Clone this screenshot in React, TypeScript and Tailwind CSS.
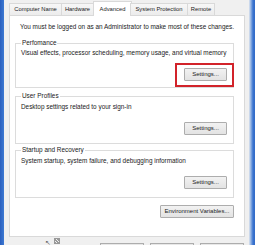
import React from 'react';

const tabs = [
  { label: 'Computer Name', w: 'w-[53px]' },
  { label: 'Hardware', w: 'w-[33px]' },
  { label: 'Advanced', w: 'w-[39px]', active: true },
  { label: 'System Protection', w: 'w-[58px]' },
  { label: 'Remote', w: 'w-[28px]' },
];

function WinButton({ label, className = '' }: { label: string; className?: string }) {
  return (
    <div
      className={`h-[13px] flex items-center justify-center border border-[#adadad] rounded-[1px] bg-gradient-to-b from-[#f2f2f2] to-[#e3e3e3] text-[#1a1a1a] text-[6px] ${className}`}
    >
      {label}
    </div>
  );
}

function GroupBox({
  title,
  text,
  className = '',
  highlight = false,
}: {
  title: string;
  text: string;
  className?: string;
  highlight?: boolean;
}) {
  return (
    <fieldset className={`border border-[#dcdcdc] px-[5px] ${className}`}>
      <legend className="px-[1px] leading-[8px] text-[#1a1a1a]">{title}</legend>
      <p className="leading-[8px] pt-[2px] text-[#1a1a1a] whitespace-nowrap">{text}</p>
      <div className="flex justify-end pr-[1px] mt-[11px]">
        <div className="relative">
          <WinButton label="Settings..." className="w-[43px]" />
          {highlight && (
            <div className="absolute -left-[9px] -right-[7px] -top-[5px] -bottom-[6px] border-2 border-[#d2232a]" />
          )}
        </div>
      </div>
    </fieldset>
  );
}

export default function App() {
  return (
    <div className="w-[255px] h-[245px] bg-[#f0f0f0] flex overflow-hidden font-['Liberation_Sans',Arial,sans-serif] text-[6.4px]">
      {/* left window edge */}
      <div className="w-[4px] shrink-0 bg-gradient-to-r from-[#2a5fbe] to-[#3d79d2]" />

      <div className="flex-1 flex flex-col pl-[5px] pr-[4px] min-h-0">
        {/* tab strip */}
        <div className="flex items-end h-[16px] shrink-0 pt-[1px] relative z-10 -mb-px text-[5.8px]">
          {tabs.map((t) =>
            t.active ? (
              <div
                key={t.label}
                className={`${t.w} h-[15px] -ml-px -mr-px bg-white border border-b-0 border-[#d9d9d9] flex items-center justify-center text-[#1a1a1a]`}
              >
                {t.label}
              </div>
            ) : (
              <div
                key={t.label}
                className={`${t.w} h-[13px] bg-gradient-to-b from-[#f7f7f7] to-[#ececec] border border-[#d9d9d9] -ml-px first:ml-0 flex items-center justify-center text-[#1a1a1a]`}
              >
                {t.label}
              </div>
            )
          )}
        </div>

        {/* tab page */}
        <div className="h-[222px] shrink-0 bg-white border border-[#d9d9d9] pt-[7px] pl-[5px] pr-[10px] flex flex-col">
          <p className="leading-[8px] pl-[5px] text-[#1a1a1a] whitespace-nowrap">
            You must be logged on as an Administrator to make most of these changes.
          </p>

          <GroupBox
            title="Perfomance"
            text="Visual effects, processor scheduling, memory usage, and virtual memory"
            className="mt-[8px] pb-[6px]"
            highlight
          />
          <GroupBox
            title="User Profiles"
            text="Desktop settings related to your sign-in"
            className="mt-[4px] pb-[8px] pt-[1px]"
          />
          <GroupBox
            title="Startup and Recovery"
            text="System startup, system failure, and debugging information"
            className="mt-[2px] pb-[8px] pt-[1px]"
          />

          <div className="flex justify-end mt-[7px]">
            <WinButton label="Environment Variables..." className="w-[74px]" />
          </div>
        </div>

        {/* dialog buttons, mostly cut off */}
        <div className="flex items-start shrink-0 pt-[1px]">
          <div className="flex items-start gap-[3px] ml-[36px] text-[#666] text-[7px] leading-[7px]">
            <span className="mt-[1px]">↖</span>
            <span className="w-[6px] h-[6px] border border-[#999] bg-[repeating-linear-gradient(45deg,#999_0_1px,transparent_1px_2px)]" />
          </div>
          <div className="flex gap-[6px] ml-auto mr-[1px] mt-[5px]">
            <div className="w-[44px] h-[10px] border border-[#adadad] bg-[#e8e8e8]" />
            <div className="w-[44px] h-[10px] border border-[#adadad] bg-[#e8e8e8]" />
            <div className="w-[44px] h-[10px] border border-[#adadad] bg-[#e8e8e8]" />
          </div>
        </div>
      </div>

      {/* right window edge */}
      <div className="w-[8px] shrink-0 bg-gradient-to-r from-[#dfe6ef] via-[#3a74cf] to-[#2a5fbe]" />
    </div>
  );
}
